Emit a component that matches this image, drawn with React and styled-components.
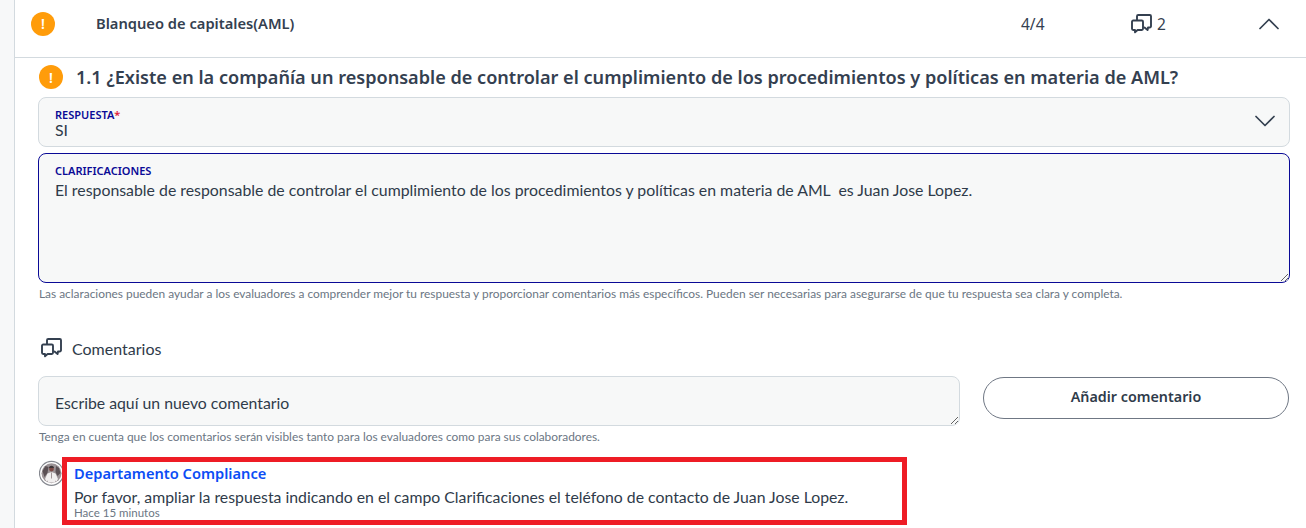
import React from 'react';
import styled, { createGlobalStyle } from 'styled-components';
import { ChevronDown, ChevronUp } from 'lucide-react';

const GlobalStyle = createGlobalStyle`
  html, body {
    margin: 0;
    padding: 0;
    height: 100%;
    overflow: hidden;
    background: #ffffff;
    font-family: "Lato", "Liberation Sans", sans-serif;
    color: #2f3b4a;
  }
`;

const Page = styled.div`
  height: 528px;
  overflow: hidden;
  display: flex;
  background: #f7f8f9;
  padding-left: 14px;
`;

const Panel = styled.div`
  flex: 1;
  background: #ffffff;
  border-left: 1px solid #d3dadf;
  min-width: 0;
`;

const Header = styled.div`
  height: 47px;
  display: flex;
  align-items: center;
  border-bottom: 1px solid #d3dadf;
  padding: 0 19px 10px 16px;
`;

const Alert = styled.span`
  width: 24px;
  height: 24px;
  flex: none;
  border-radius: 50%;
  background: #ff9c0a;
  color: #ffffff;
  display: flex;
  align-items: center;
  justify-content: center;
  font: 600 14px "Noto Sans", sans-serif;
`;

const SectionTitle = styled.div`
  margin-left: 41px;
  margin-bottom: 2px;
  font: 600 14.7px "Noto Sans", sans-serif;
  color: #344050;
  flex: 1;
`;

const Progress = styled.div`
  width: 110px;
  font: 400 15.5px "Noto Sans", sans-serif;
  color: #344050;
`;

const CommentCount = styled.div`
  width: 120px;
  display: flex;
  align-items: center;
  gap: 5px;
  font: 400 15.5px "Noto Sans", sans-serif;
  color: #344050;
`;

const Body = styled.div`
  padding: 7px 16px 0 23px;
`;

const Question = styled.div`
  display: flex;
  align-items: center;
  height: 24px;
  gap: 13px;
  padding-left: 1px;
  font: 600 18.1px "Noto Sans", sans-serif;
  color: #344050;
  white-space: nowrap;
`;

const Field = styled.div`
  position: relative;
  box-sizing: border-box;
  background: #f7f8f8;
  border: 1px solid ${p => (p.$active ? '#0a0a96' : '#d3dadf')};
  border-radius: 8px;
  padding: 10px 16px 0;
  height: ${p => p.$height}px;
  margin-top: ${p => p.$top}px;
  width: ${p => p.$width || 'auto'};
  overflow: auto;
  resize: ${p => (p.$resize ? 'vertical' : 'none')};
`;

const FieldLabel = styled.div`
  font: 600 11px/13px "Noto Sans", sans-serif;
  color: #0a0a96;
  text-transform: uppercase;
  span { color: #e0203a; }
`;

const FieldValue = styled.div`
  font: 400 15.85px/${p => p.$lineHeight}px "Lato", sans-serif;
  color: #2f3b4a;
  white-space: pre-wrap;
`;

const SelectIcon = styled.span`
  position: absolute;
  right: 6px;
  top: 5px;
  display: flex;
  color: #344050;
`;

const Hint = styled.div`
  font: 400 11.9px/14px "Lato", sans-serif;
  color: #6b7683;
  margin-top: ${p => p.$top}px;
  padding-left: 1px;
  white-space: nowrap;
`;

const CommentsTitle = styled.div`
  display: flex;
  align-items: center;
  gap: 10px;
  margin-top: 35px;
  height: 24px;
  padding-left: 3px;
  font: 400 16px "Lato", sans-serif;
  color: #2f3b4a;
`;

const NewCommentRow = styled.div`
  display: flex;
  align-items: flex-start;
  margin-top: 16px;
`;

const Placeholder = styled.div`
  font: 400 15.8px/20px "Lato", sans-serif;
  color: #2f3b4a;
  padding-top: 6px;
`;

const AddButton = styled.button`
  margin-left: 23px;
  margin-top: 1px;
  width: 306px;
  height: 42px;
  padding-bottom: 5px;
  background: #ffffff;
  border: 1px solid #6f7784;
  border-radius: 21px;
  font: 600 14.3px "Noto Sans", sans-serif;
  color: #2f3b4a;
`;

const CommentRow = styled.div`
  display: flex;
  align-items: flex-start;
  margin-top: 13px;
  padding-left: 1px;
`;

const Avatar = styled.span`
  width: 25px;
  height: 26px;
  flex: none;
  margin-top: 3px;
  margin-right: -2px;
  display: flex;
`;

const Highlight = styled.div`
  box-sizing: border-box;
  width: 845px;
  height: 68px;
  border: 5px solid #ee1c25;
  padding: 1px 7px 0;
`;

const Author = styled.div`
  font: 600 14.65px/20px "Noto Sans", sans-serif;
  color: #0b4df5;
`;

const CommentText = styled.div`
  font: 400 15.8px/20px "Lato", sans-serif;
  color: #2f3b4a;
  margin-top: 4px;
`;

const CommentTime = styled.div`
  font: 400 11.5px/12px "Lato", sans-serif;
  color: #6b7683;
`;

const ChatIcon = () => (
  <svg width="21" height="20" viewBox="0 0 21 20" fill="none" stroke="#344050" strokeWidth="1.9" strokeLinejoin="round" strokeLinecap="round">
    <path d="M6 6V2.2A1.2 1.2 0 0 1 7.2 1h11.6A1.2 1.2 0 0 1 20 2.2v10.1a1.2 1.2 0 0 1-1.2 1.2H17l-.4 2.6-3.1-2.6" />
    <path d="M2.2 6.5h8.6a1.2 1.2 0 0 1 1.2 1.2v7.1a1.2 1.2 0 0 1-1.2 1.2H6.6l-2.6 2.3v-2.3H2.2A1.2 1.2 0 0 1 1 14.8V7.7a1.2 1.2 0 0 1 1.2-1.2z" />
  </svg>
);

const Portrait = () => (
  <svg width="25" height="26" viewBox="0 0 25 26">
    <circle cx="12.5" cy="13.3" r="12" fill="#ffffff" stroke="#85888f" strokeWidth="1.2" />
    <circle cx="12.5" cy="13.3" r="10" fill="#9b9396" />
    <path d="M3.5 11l3-5 3 1-1 6-3 4zM17 6l3 2 1.500 5-3 3-2-4z" fill="#5a5054" />
    <circle cx="12.500" cy="9" r="2.400" fill="#7d4a45" />
    <path d="M12.500 5.800a2.800 2.800 0 0 1 2.600 2.200h-5.200a2.800 2.800 0 0 1 2.600-2.200z" fill="#3c3436" />
    <path d="M6 19l2.500-5.500 4-1.500 4 1.500 2.500 5.500-1.500 2.500-1-1-.5 2h-7l-.5-2-1 1z" fill="#f1efef" />
    <path d="M12.500 12.500v6" stroke="#8a7d80" strokeWidth=".8" />
  </svg>
);

export default function App() {
  return (
    <Page>
      <GlobalStyle />
      <Panel>
        <Header>
          <Alert>!</Alert>
          <SectionTitle>Blanqueo de capitales(AML)</SectionTitle>
          <Progress>4/4</Progress>
          <CommentCount>
            <ChatIcon />
            2
          </CommentCount>
          <ChevronUp size={36} strokeWidth={1.15} color="#344050" />
        </Header>
        <Body>
          <Question>
            <Alert>!</Alert>
            1.1 ¿Existe en la compañía un responsable de controlar el cumplimiento de los procedimientos y políticas en materia de AML?
          </Question>
          <Field $height={50} $top={8}>
            <FieldLabel>Respuesta<span>*</span></FieldLabel>
            <FieldValue $lineHeight={18}>SI</FieldValue>
            <SelectIcon><ChevronDown size={36} strokeWidth={1.15} /></SelectIcon>
          </Field>
          <Field $height={130} $top={6} $active $resize>
            <FieldLabel>Clarificaciones</FieldLabel>
            <FieldValue $lineHeight={26}>El responsable de responsable de controlar el cumplimiento de los procedimientos y políticas en materia de AML  es Juan Jose Lopez.</FieldValue>
          </Field>
          <Hint $top={4}>Las aclaraciones pueden ayudar a los evaluadores a comprender mejor tu respuesta y proporcionar comentarios más específicos. Pueden ser necesarias para asegurarse de que tu respuesta sea clara y completa.</Hint>
          <CommentsTitle>
            <ChatIcon />
            Comentarios
          </CommentsTitle>
          <NewCommentRow>
            <Field $height={50} $top={0} $width="922px" $resize>
              <Placeholder>Escribe aquí un nuevo comentario</Placeholder>
            </Field>
            <AddButton>Añadir comentario</AddButton>
          </NewCommentRow>
          <Hint $top={4}>Tenga en cuenta que los comentarios serán visibles tanto para los evaluadores como para sus colaboradores.</Hint>
          <CommentRow>
            <Avatar><Portrait /></Avatar>
            <Highlight>
              <Author>Departamento Compliance</Author>
              <CommentText>Por favor, ampliar la respuesta indicando en el campo Clarificaciones el teléfono de contacto de Juan Jose Lopez.</CommentText>
              <CommentTime>Hace 15 minutos</CommentTime>
            </Highlight>
          </CommentRow>
        </Body>
      </Panel>
    </Page>
  );
}
